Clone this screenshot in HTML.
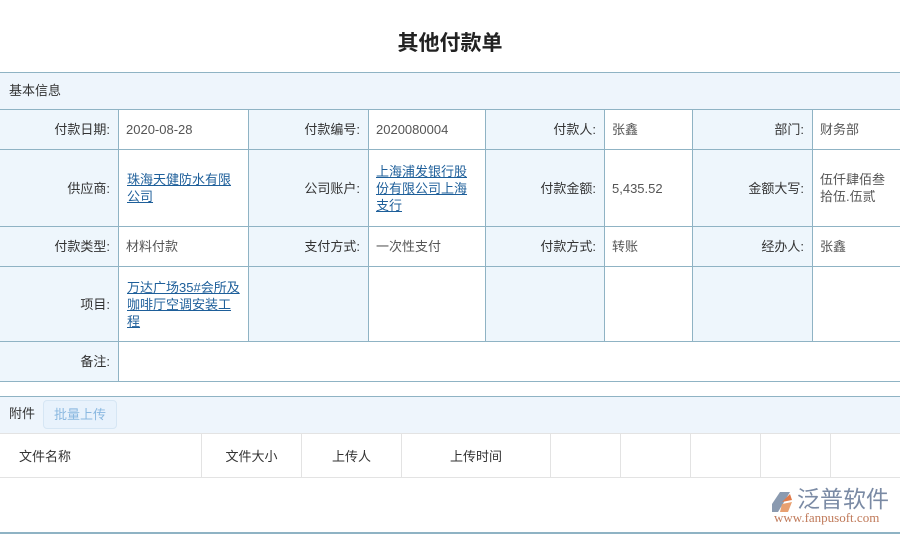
<!DOCTYPE html>
<html><head><meta charset="utf-8"><style>
*{margin:0;padding:0;box-sizing:border-box}
body{width:900px;height:535px;background:#fff;font-family:"Liberation Sans","Noto Sans CJK SC",sans-serif;font-size:13px;color:#333;position:relative;overflow:hidden}
.a{position:absolute}
.c{position:absolute;border:1px solid #8fb3c4;display:flex;align-items:center;line-height:17px}
.l{background:#eef6fc;justify-content:flex-end;padding-right:8px;color:#333}
.v{background:#fff;padding-left:7px;color:#555}
.v a{color:#1e5f9a;text-decoration:underline}
.h{position:absolute;top:433px;height:45px;border-right:1px solid #e3e3e3;display:flex;align-items:center;justify-content:center;color:#333}
</style></head><body>
<div class="a" style="top:27px;left:0;width:900px;text-align:center;font-size:21px;font-weight:bold;color:#222">其他付款单</div>
<div class="a" style="top:72px;left:0;width:900px;height:38px;background:#eef5fc;border-top:1px solid #8fb3c4;border-bottom:1px solid #8fb3c4;padding-left:9px;line-height:36px">基本信息</div>

<div class="c l" style="left:-1px;top:109px;width:120px;height:41px">付款日期:</div>
<div class="c v" style="left:118px;top:109px;width:131px;height:41px">2020-08-28</div>
<div class="c l" style="left:248px;top:109px;width:121px;height:41px">付款编号:</div>
<div class="c v" style="left:368px;top:109px;width:118px;height:41px">2020080004</div>
<div class="c l" style="left:485px;top:109px;width:120px;height:41px">付款人:</div>
<div class="c v" style="left:604px;top:109px;width:89px;height:41px">张鑫</div>
<div class="c l" style="left:692px;top:109px;width:121px;height:41px">部门:</div>
<div class="c v" style="left:812px;top:109px;width:90px;height:41px">财务部</div>

<div class="c l" style="left:-1px;top:149px;width:120px;height:78px">供应商:</div>
<div class="c v" style="left:118px;top:149px;width:131px;height:78px;padding-left:8px;padding-right:10px"><a>珠海天健防水有限公司</a></div>
<div class="c l" style="left:248px;top:149px;width:121px;height:78px">公司账户:</div>
<div class="c v" style="left:368px;top:149px;width:118px;height:78px;padding-right:10px"><a>上海浦发银行股份有限公司上海支行</a></div>
<div class="c l" style="left:485px;top:149px;width:120px;height:78px">付款金额:</div>
<div class="c v" style="left:604px;top:149px;width:89px;height:78px">5,435.52</div>
<div class="c l" style="left:692px;top:149px;width:121px;height:78px">金额大写:</div>
<div class="c v" style="left:812px;top:149px;width:90px;height:78px;padding-right:12px">伍仟肆佰叁拾伍.伍贰</div>

<div class="c l" style="left:-1px;top:226px;width:120px;height:41px">付款类型:</div>
<div class="c v" style="left:118px;top:226px;width:131px;height:41px">材料付款</div>
<div class="c l" style="left:248px;top:226px;width:121px;height:41px">支付方式:</div>
<div class="c v" style="left:368px;top:226px;width:118px;height:41px">一次性支付</div>
<div class="c l" style="left:485px;top:226px;width:120px;height:41px">付款方式:</div>
<div class="c v" style="left:604px;top:226px;width:89px;height:41px">转账</div>
<div class="c l" style="left:692px;top:226px;width:121px;height:41px">经办人:</div>
<div class="c v" style="left:812px;top:226px;width:90px;height:41px">张鑫</div>

<div class="c l" style="left:-1px;top:266px;width:120px;height:76px">项目:</div>
<div class="c v" style="left:118px;top:266px;width:131px;height:76px;padding-left:8px;padding-right:6px"><a>万达广场35#会所及咖啡厅空调安装工程</a></div>
<div class="c l" style="left:248px;top:266px;width:121px;height:76px"></div>
<div class="c v" style="left:368px;top:266px;width:118px;height:76px"></div>
<div class="c l" style="left:485px;top:266px;width:120px;height:76px"></div>
<div class="c v" style="left:604px;top:266px;width:89px;height:76px"></div>
<div class="c l" style="left:692px;top:266px;width:121px;height:76px"></div>
<div class="c v" style="left:812px;top:266px;width:90px;height:76px"></div>

<div class="c l" style="left:-1px;top:341px;width:120px;height:41px">备注:</div>
<div class="c v" style="left:118px;top:341px;width:784px;height:41px"></div>

<div class="a" style="top:396px;left:0;width:900px;height:38px;background:#eef5fc;border-top:1px solid #8fb3c4;border-bottom:1px solid #e3e3e3"></div>
<div class="a" style="top:405px;left:9px;line-height:17px">附件</div>
<div class="a" style="top:400px;left:43px;width:74px;height:29px;border:1px solid #d6e6f4;border-radius:4px;background:#e8f2fc;color:#8ab8e0;text-align:center;line-height:27px">批量上传</div>
<div class="h" style="left:0;width:202px;justify-content:flex-start;padding-left:19px">文件名称</div>
<div class="h" style="left:202px;width:100px">文件大小</div>
<div class="h" style="left:302px;width:100px">上传人</div>
<div class="h" style="left:402px;width:149px">上传时间</div>
<div class="h" style="left:551px;width:70px"></div>
<div class="h" style="left:621px;width:70px"></div>
<div class="h" style="left:691px;width:70px"></div>
<div class="h" style="left:761px;width:70px"></div>
<div class="a" style="top:477px;left:0;width:900px;border-top:1px solid #e3e3e3"></div>
<div class="a" style="top:532px;left:0;width:900px;border-top:2px solid #8fb3c4"></div>

<svg class="a" style="left:770px;top:490px" width="26" height="24" viewBox="0 0 26 24">
<path d="M10 2 L20 2 L14 12 L8 22 L2 22 L2 14 Z" fill="#8a9ab0"/>
<path d="M12 12 L20 4 L22 10 Z" fill="#e07a4a"/>
<path d="M12 14 L22 12 L18 22 L10 22 Z" fill="#e8a070"/>
</svg>
<div class="a" style="left:797px;top:486px;font-size:23px;color:#7a8aa4;line-height:26px;letter-spacing:0px">泛普软件</div>
<div class="a" style="left:774px;top:511px;font-family:'Liberation Serif',serif;font-size:13px;color:#c07a5a;line-height:14px">www.fanpusoft.com</div>
</body></html>
